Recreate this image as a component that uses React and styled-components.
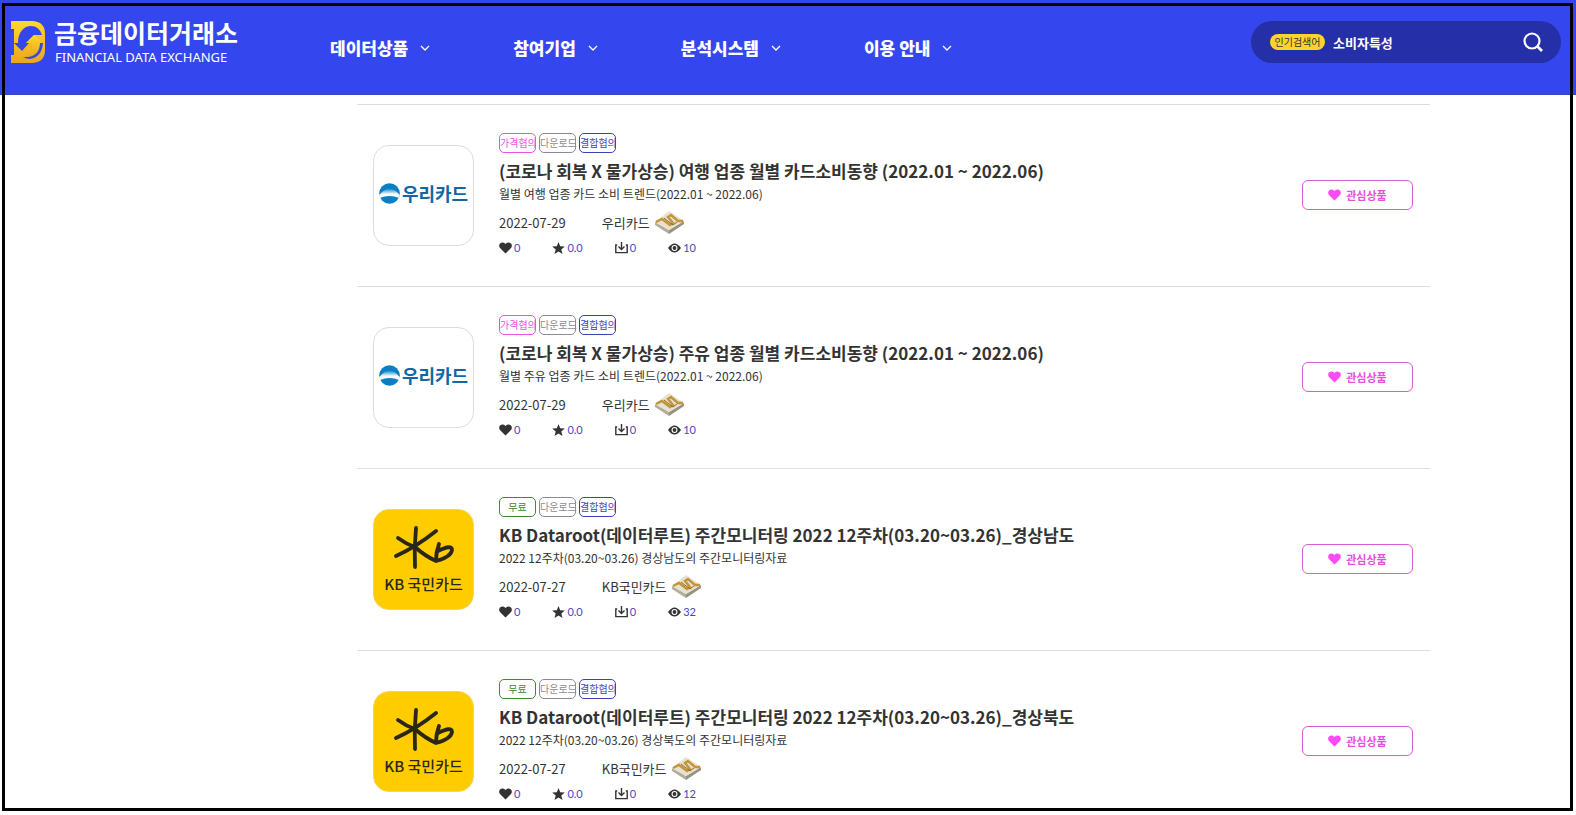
import React from 'react'
import styled, { createGlobalStyle } from 'styled-components'

const GlobalStyle = createGlobalStyle`
  * {
    box-sizing: border-box;
  }
  body {
    margin: 0;
    background: #fff;
    color: #333;
    font-family: 'Noto Sans CJK KR', 'Noto Sans', sans-serif;
  }
`

const Header = styled.header`
  display: flex;
  align-items: flex-start;
  height: 95px;
  padding: 21px 15px 0 11px;
  background: #3446ee;
  border-bottom: 1px solid #3a45c4;
`
const Logo = styled.a`
  display: flex;
  gap: 8px;
  color: #fff;
  text-decoration: none;
`
const LogoName = styled.strong`
  display: block;
  font-size: 25px;
  font-weight: 700;
  line-height: 22px;
`
const LogoSub = styled.span`
  display: block;
  margin-left: 1px;
  font-family: 'Noto Sans', sans-serif;
  font-size: 13px;
  line-height: 28px;
  white-space: nowrap;
`
const Nav = styled.nav`
  display: flex;
  gap: 82px;
  margin-left: 92px;
  padding-top: 14px;
`
const NavLink = styled.a`
  display: flex;
  align-items: center;
  gap: 11px;
  color: #fff;
  font-size: 17px;
  font-weight: 900;
  line-height: 26px;
  text-decoration: none;
  white-space: nowrap;
`
const Search = styled.form`
  display: flex;
  align-items: center;
  width: 310px;
  height: 42px;
  margin-left: auto;
  padding: 0 18px 0 19px;
  border-radius: 21px;
  background: #242fa8;
`
const HotLabel = styled.label`
  flex: none;
  width: 55px;
  height: 16px;
  border-radius: 8px;
  background: #ffd42a;
  color: #333;
  font-size: 10px;
  line-height: 16px;
  text-align: center;
`
const SearchInput = styled.input`
  flex: 1;
  min-width: 0;
  padding: 0 0 0 8px;
  border: 0;
  outline: 0;
  background: transparent;
  color: #fff;
  font-family: inherit;
  font-size: 13px;
  font-weight: 700;
`
const SearchButton = styled.button`
  display: flex;
  padding: 0;
  border: 0;
  background: none;
  color: #fff;
`

const List = styled.ul`
  margin: 9px 146px 0 357px;
  padding: 0;
  list-style: none;
`
const Row = styled.li`
  display: flex;
  align-items: center;
  padding: 28px 17px 29px 16px;
  border-top: 1px solid #ddd;
  &:last-child {
    padding-bottom: 8px;
  }
`
const Thumb = styled.div`
  display: flex;
  flex-direction: ${p => (p.$kb ? 'column' : 'row')};
  align-items: center;
  justify-content: center;
  flex: none;
  gap: ${p => (p.$kb ? '4px' : '2px')};
  width: 101px;
  height: 101px;
  margin-right: 25px;
  padding-bottom: ${p => (p.$kb ? '0' : '4px')};
  border: 1px solid ${p => (p.$kb ? '#f5d460' : '#ddd')};
  border-radius: 16px;
  background: ${p => (p.$kb ? '#ffcc00' : '#fff')};
`
const WooriName = styled.span`
  color: #0f67a6;
  font-size: 18px;
  font-weight: 700;
  line-height: 22px;
`
const KbName = styled.span`
  color: #2b2718;
  font-size: 15px;
  font-weight: 500;
  line-height: 20px;
`
const Info = styled.div`
  flex: 1;
`
const Tags = styled.div`
  display: flex;
  gap: 3px;
`
const Tag = styled.span`
  width: 37px;
  height: 20px;
  border: 1px solid ${p => p.$color};
  border-radius: 5px;
  color: ${p => p.$color};
  font-size: 10px;
  line-height: 18px;
  text-align: center;
  white-space: nowrap;
`
const Title = styled.h2`
  margin: 5px 0 0;
  font-size: 17px;
  font-weight: 700;
  line-height: 26px;
`
const Desc = styled.p`
  margin: 0;
  font-size: 12px;
  line-height: 20px;
`
const Meta = styled.div`
  display: flex;
  align-items: center;
  height: 22px;
  margin-top: 7px;
  font-size: 13px;
`
const Company = styled.span`
  margin: 0 5px 0 36px;
`
const Stats = styled.div`
  display: flex;
  gap: 32px;
  margin-top: 6px;
`
const Stat = styled.span`
  display: flex;
  align-items: center;
  gap: 2px;
  color: #4547c8;
  font-family: Lato, sans-serif;
  font-size: 11px;
  line-height: 18px;
  svg {
    color: #333;
  }
`
const WishButton = styled.button`
  display: flex;
  align-items: center;
  justify-content: center;
  gap: 5px;
  width: 111px;
  height: 30px;
  padding: 0;
  border: 1px solid #d45fd2;
  border-radius: 6px;
  background: #fff;
  color: #e84fdf;
  font-family: inherit;
  font-size: 11px;
  font-weight: 700;
  svg {
    color: #ff4af5;
  }
`
const Frame = styled.div`
  position: fixed;
  inset: 3px 3px 4px 2px;
  border: 3px solid #000;
  pointer-events: none;
`

const PINK = '#ee4fe4'
const GRAY = '#8b8b95'
const BLUE = '#3a44b8'
const GREEN = '#3f8a2c'

const menus = ['데이터상품', '참여기업', '분석시스템', '이용 안내']

const products = [
  {
    price: '가격협의',
    title: '(코로나 회복 X 물가상승) 여행 업종 월별 카드소비동향 (2022.01 ~ 2022.06)',
    desc: '월별 여행 업종 카드 소비 트렌드(2022.01 ~ 2022.06)',
    date: '2022-07-29',
    company: '우리카드',
    views: 10
  },
  {
    price: '가격협의',
    title: '(코로나 회복 X 물가상승) 주유 업종 월별 카드소비동향 (2022.01 ~ 2022.06)',
    desc: '월별 주유 업종 카드 소비 트렌드(2022.01 ~ 2022.06)',
    date: '2022-07-29',
    company: '우리카드',
    views: 10
  },
  {
    price: '무료',
    title: 'KB Dataroot(데이터루트) 주간모니터링 2022 12주차(03.20~03.26)_경상남도',
    desc: '2022 12주차(03.20~03.26) 경상남도의 주간모니터링자료',
    date: '2022-07-27',
    company: 'KB국민카드',
    views: 32
  },
  {
    price: '무료',
    title: 'KB Dataroot(데이터루트) 주간모니터링 2022 12주차(03.20~03.26)_경상북도',
    desc: '2022 12주차(03.20~03.26) 경상북도의 주간모니터링자료',
    date: '2022-07-27',
    company: 'KB국민카드',
    views: 12
  }
]

const LogoMark = () => (
  <svg width="35" height="42" viewBox="0 0 35 42" aria-hidden="true">
    <defs>
      <linearGradient id="gold" x1="0" y1="0" x2="0" y2="1">
        <stop offset="0" stopColor="#ffd72e" />
        <stop offset="1" stopColor="#eda51d" />
      </linearGradient>
    </defs>
    <path
      d="M0 0h22q12 1 12 13v16q0 12-12 13H0v-8h3V8H0z"
      fill="url(#gold)"
    />
    <path
      d="M3 22h4C7 11 13 5 20 5c5 0 9 3 11 9h-8l-8 8h3l-7 8z"
      fill="#3446ee"
    />
    <path d="M12 36c8 1 14-5 14-14h6q-1 14-13 16-4 0-7-2z" fill="#3446ee" />
    <path d="M15 22l8-8 9 8h-3c0 9-6 15-15 14 6-2 8-7 7-14z" fill="url(#gold)" />
  </svg>
)

const Chevron = () => (
  <svg width="12" height="8" viewBox="0 0 12 8" aria-hidden="true">
    <path d="M2 2l4 4 4-4" fill="none" stroke="currentColor" strokeWidth="1.3" />
  </svg>
)

const SearchIcon = () => (
  <svg width="20" height="20" viewBox="0 0 20 20" aria-hidden="true">
    <circle cx="9" cy="9" r="7.5" fill="none" stroke="currentColor" strokeWidth="2.2" />
    <path d="M14 14l5 5" stroke="currentColor" strokeWidth="2.6" />
  </svg>
)

const Heart = () => (
  <svg width="13" height="12" viewBox="0 0 13 12" aria-hidden="true">
    <path
      d="M6.5 11.5L1 6Q-.7 3.5 1 1.5 3.8-.7 6.5 2 9.2-.7 12 1.5q1.7 2 0 4.5z"
      fill="currentColor"
    />
  </svg>
)

const Star = () => (
  <svg width="13" height="12" viewBox="0 0 13 12" aria-hidden="true">
    <path
      d="M6.5 0l1.7 4.2 4.6.3-3.5 2.9 1.2 4.5-4-2.5-4 2.5 1.2-4.5L.2 4.5l4.6-.3z"
      fill="currentColor"
    />
  </svg>
)

const Download = () => (
  <svg width="13" height="12" viewBox="0 0 13 12" aria-hidden="true">
    <path
      d="M2.2 3H.8v7.6h11.4V3h-1.4M6.5 0v7M3.5 4.5l3 3 3-3"
      fill="none"
      stroke="currentColor"
      strokeWidth="1.4"
    />
  </svg>
)

const Eye = () => (
  <svg width="13" height="12" viewBox="0 0 13 12" aria-hidden="true">
    <path
      fillRule="evenodd"
      d="M0 6q6.5-9 13 0-6.5 9-13 0zm6.5-3a3 3 0 1 0 0 6 3 3 0 0 0 0-6z"
      fill="currentColor"
    />
    <circle cx="6.5" cy="6" r="1.9" fill="currentColor" />
  </svg>
)

const Medal = () => (
  <svg width="29" height="23" viewBox="0 0 29 23" aria-hidden="true">
    <path d="M0 11v3l14 9v-4z" fill="#b3ad9c" />
    <path d="M29 10v3l-15 10v-4z" fill="#98927f" />
    <path d="M14 0l15 10-15 9L0 11z" fill="#e6e1d0" />
    <path
      d="M1 11l6-3 8 6 3-2-5-6 3-2 7 6 5 0"
      fill="none"
      stroke="#c3953a"
      strokeWidth="2.4"
    />
    <path d="M9 7l9 7 4-3" fill="none" stroke="#8f6a22" strokeWidth="1" />
  </svg>
)

const WooriMark = () => (
  <svg width="21" height="21" viewBox="0 0 21 21" aria-hidden="true">
    <defs>
      <linearGradient id="woori" x1="0" y1="0" x2="0" y2="1">
        <stop offset="0" stopColor="#0783ca" />
        <stop offset="0.6" stopColor="#ffffff" />
      </linearGradient>
    </defs>
    <circle cx="10.5" cy="10.5" r="10.3" fill="#0b7fc6" />
    <path d="M.3 12Q10.5-1 20.7 12l-.5 3Q10.5 11 .8 15z" fill="url(#woori)" />
  </svg>
)

const KbMark = () => (
  <svg width="60" height="46" viewBox="21 16 60 46" aria-hidden="true">
    <g fill="none" stroke="#2b2718" strokeWidth="3.8" strokeLinecap="round">
      <path d="M43 20q-2 20-1 39" />
      <path d="M25 30q8 6 17 9" />
      <path d="M23 48q20-9 40-25" />
      <path d="M42 39q10 9 21 14 15-4 16-11 0-6-14 1" />
      <path d="M66 36q-3 8-3 16" />
    </g>
  </svg>
)

const Product = ({ item }) => {
  const kb = item.company !== '우리카드'
  return (
    <Row>
      <Thumb $kb={kb}>
        {kb ? <KbMark /> : <WooriMark />}
        {kb ? <KbName>KB 국민카드</KbName> : <WooriName>우리카드</WooriName>}
      </Thumb>
      <Info>
        <Tags>
          <Tag $color={kb ? GREEN : PINK}>{item.price}</Tag>
          <Tag $color={GRAY}>다운로드</Tag>
          <Tag $color={BLUE}>결합협의</Tag>
        </Tags>
        <Title>{item.title}</Title>
        <Desc>{item.desc}</Desc>
        <Meta>
          <time>{item.date}</time>
          <Company>{item.company}</Company>
          <Medal />
        </Meta>
        <Stats>
          <Stat><Heart />0</Stat>
          <Stat><Star />0.0</Stat>
          <Stat><Download />0</Stat>
          <Stat><Eye />{item.views}</Stat>
        </Stats>
      </Info>
      <WishButton type="button">
        <Heart />
        관심상품
      </WishButton>
    </Row>
  )
}

const App = () => (
  <>
    <GlobalStyle />
    <Header>
      <Logo href="#">
        <LogoMark />
        <span>
          <LogoName>금융데이터거래소</LogoName>
          <LogoSub>FINANCIAL DATA EXCHANGE</LogoSub>
        </span>
      </Logo>
      <Nav>
        {menus.map(menu => (
          <NavLink href="#" key={menu}>
            {menu}
            <Chevron />
          </NavLink>
        ))}
      </Nav>
      <Search>
        <HotLabel htmlFor="keyword">인기검색어</HotLabel>
        <SearchInput id="keyword" defaultValue="소비자특성" />
        <SearchButton type="button" aria-label="검색">
          <SearchIcon />
        </SearchButton>
      </Search>
    </Header>
    <main>
      <List>
        {products.map(item => (
          <Product item={item} key={item.title} />
        ))}
      </List>
    </main>
    <Frame />
  </>
)

export default App
